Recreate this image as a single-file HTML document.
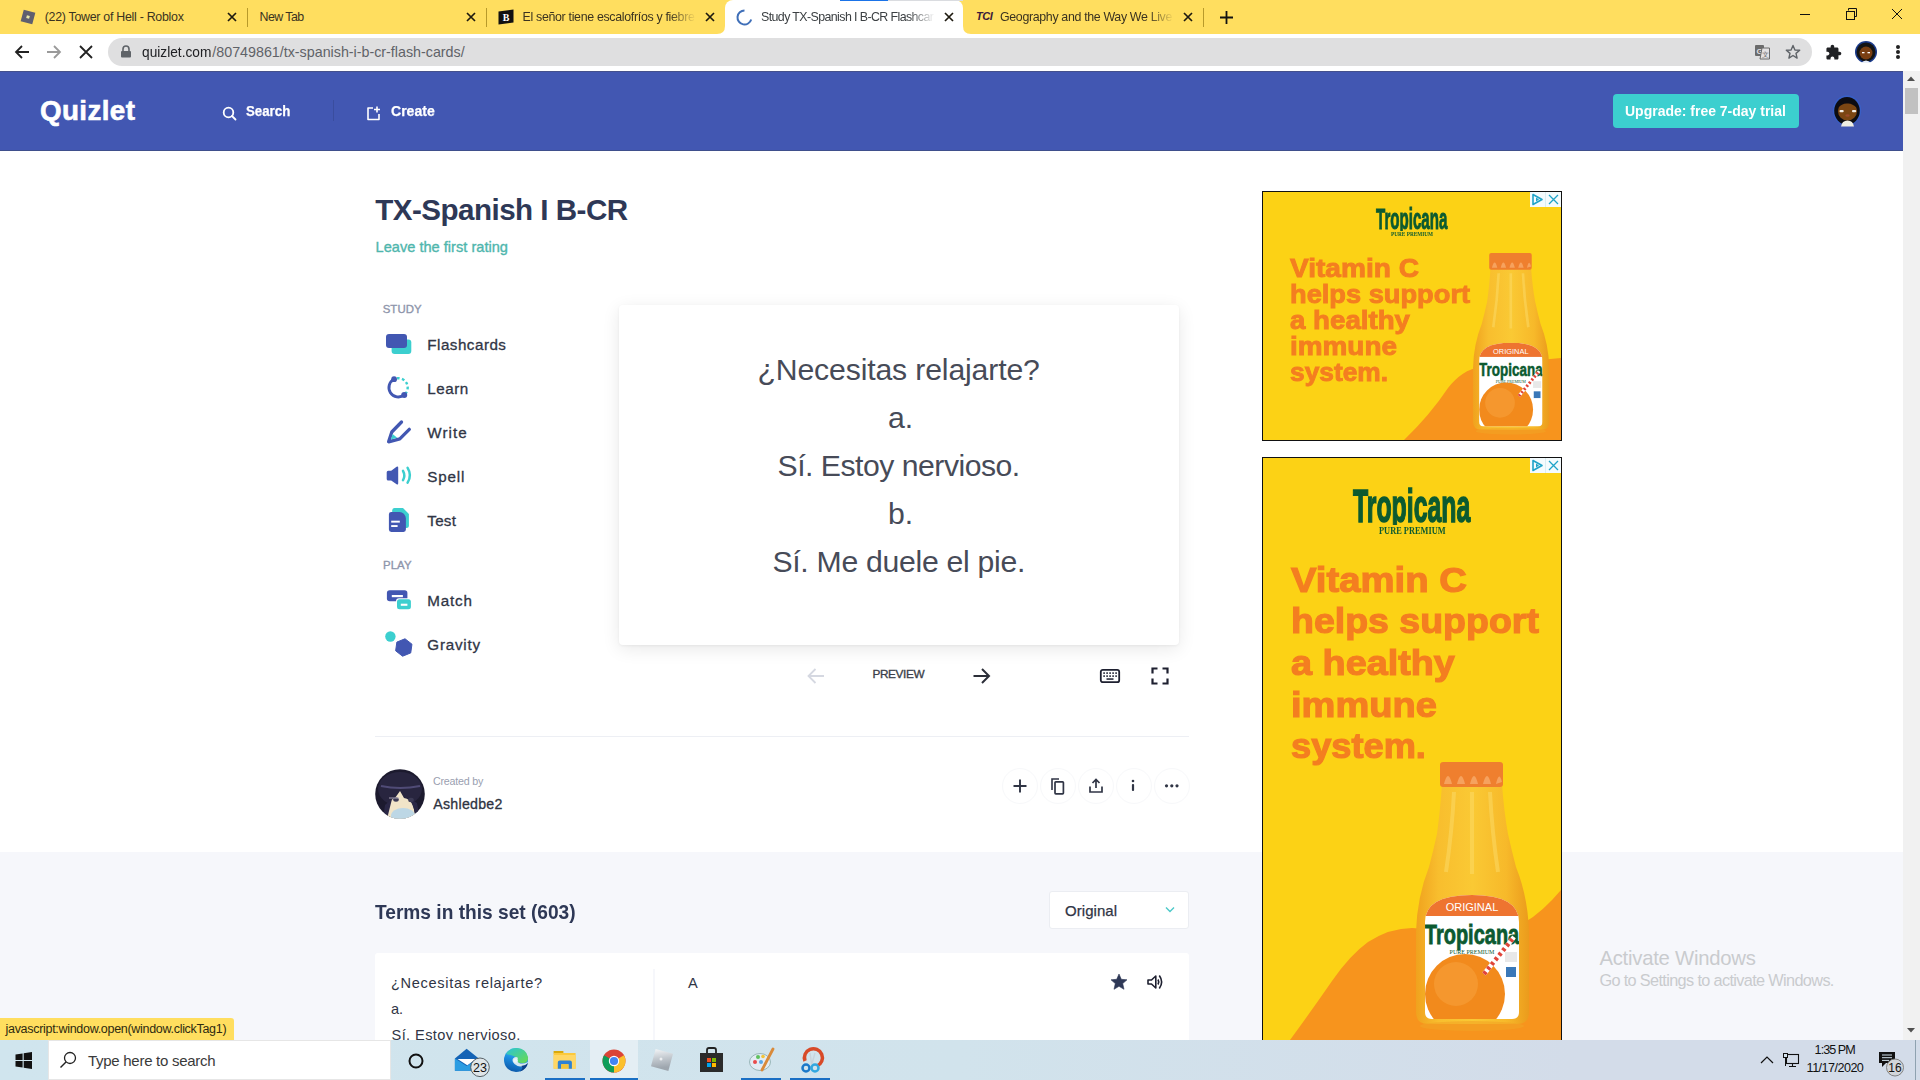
<!DOCTYPE html>
<html><head><meta charset="utf-8"><title>Quizlet</title>
<style>
html,body{margin:0;padding:0}
body{width:1920px;height:1080px;overflow:hidden;position:relative;background:#fff;font-family:"Liberation Sans",sans-serif}
.t{position:absolute;white-space:nowrap;line-height:1;transform-origin:left top}
svg{overflow:visible}
</style></head><body>
<div style="position:absolute;left:0;top:0;width:1920px;height:34px;background:#FFDE5F"></div>
<div style="position:absolute;left:725px;top:0;width:238px;height:35px;background:#fff;border-radius:8px 8px 0 0"></div>
<svg style="position:absolute;left:717px;top:26px" width="8" height="8"><path d="M0 8 Q8 8 8 0 L8 8 Z" fill="#fff"/></svg>
<svg style="position:absolute;left:963px;top:26px" width="8" height="8"><path d="M8 8 Q0 8 0 0 L0 8 Z" fill="#fff"/></svg>
<div style="position:absolute;left:840px;top:0;width:48px;height:1px;background:#1a73e8"></div>
<div style="position:absolute;left:888px;top:0;width:75px;height:1px;background:#dadce0"></div>
<svg style="position:absolute;left:19px;top:8px" width="18" height="18"><rect x="3" y="3" width="12" height="12" fill="#5f5f6f" transform="rotate(15 9 9)"/><rect x="7.5" y="7.5" width="3" height="3" fill="#e8e8a8" transform="rotate(15 9 9)"/></svg>
<svg style="position:absolute;left:497px;top:8px" width="18" height="18"><path d="M1.5 3.5 L16.5 1.5 L16.5 14.5 L1.5 16.5 Z" fill="#111"/><text x="9" y="13" font-family="Liberation Serif" font-weight="700" font-size="10" fill="#fff" text-anchor="middle">B</text></svg>
<svg style="position:absolute;left:736px;top:9px" width="17" height="17"><path d="M8.5 1.5 A7 7 0 1 0 15.2 10.5" fill="none" stroke="#3f6fb8" stroke-width="2"/></svg>
<div class="t" style="left:976px;top:11px;font-size:11px;font-weight:700;font-style:italic;color:#3a1a3a;letter-spacing:-0.5px">TCI</div>
<div class="t" style="left:44.70px;top:10.50px;font-size:12.40px;font-weight:400;color:#3b3320;letter-spacing:-0.280px;">(22) Tower of Hell - Roblox</div>
<div class="t" style="left:259.60px;top:10.50px;font-size:12.40px;font-weight:400;color:#3b3320;letter-spacing:-0.558px;">New Tab</div>
<div style="position:absolute;left:520px;top:0;width:176px;height:34px;overflow:hidden;-webkit-mask-image:linear-gradient(90deg,#000 85%,transparent)"><div class="t" style="left:2.50px;top:10.50px;font-size:12.40px;font-weight:400;color:#3b3320;letter-spacing:-0.319px;">El señor tiene escalofríos y fiebre</div></div>
<div style="position:absolute;left:759px;top:0;width:176px;height:34px;overflow:hidden;-webkit-mask-image:linear-gradient(90deg,#000 85%,transparent)"><div class="t" style="left:2.00px;top:10.50px;font-size:12.40px;font-weight:400;color:#3c4043;letter-spacing:-0.591px;">Study TX-Spanish I B-CR Flashcar</div></div>
<div style="position:absolute;left:998px;top:0;width:176px;height:34px;overflow:hidden;-webkit-mask-image:linear-gradient(90deg,#000 85%,transparent)"><div class="t" style="left:2.00px;top:10.50px;font-size:12.40px;font-weight:400;color:#3b3320;letter-spacing:-0.338px;">Geography and the Way We Live</div></div>
<svg style="position:absolute;left:227px;top:12px" width="10" height="10"><path d="M1 1 L9 9 M9 1 L1 9" stroke="#1e1a10" stroke-width="1.7"/></svg>
<svg style="position:absolute;left:466px;top:12px" width="10" height="10"><path d="M1 1 L9 9 M9 1 L1 9" stroke="#1e1a10" stroke-width="1.7"/></svg>
<svg style="position:absolute;left:705px;top:12px" width="10" height="10"><path d="M1 1 L9 9 M9 1 L1 9" stroke="#1e1a10" stroke-width="1.7"/></svg>
<svg style="position:absolute;left:944px;top:12px" width="10" height="10"><path d="M1 1 L9 9 M9 1 L1 9" stroke="#1e1a10" stroke-width="1.7"/></svg>
<svg style="position:absolute;left:1183px;top:12px" width="10" height="10"><path d="M1 1 L9 9 M9 1 L1 9" stroke="#1e1a10" stroke-width="1.7"/></svg>
<div style="position:absolute;left:247px;top:8px;width:1px;height:19px;background:#b89a2a"></div>
<div style="position:absolute;left:486px;top:8px;width:1px;height:19px;background:#b89a2a"></div>
<div style="position:absolute;left:1203px;top:8px;width:1px;height:19px;background:#b89a2a"></div>
<svg style="position:absolute;left:1219px;top:10px" width="15" height="15"><path d="M7.5 1 V14 M1 7.5 H14" stroke="#111" stroke-width="1.8"/></svg>
<div style="position:absolute;left:1800px;top:14px;width:10px;height:1px;background:#111"></div>
<svg style="position:absolute;left:1845px;top:8px" width="13" height="13"><path d="M3.5 2.5 V0.5 H11.5 V8.5 H9.5" fill="none" stroke="#111" stroke-width="1"/><rect x="1.5" y="3.5" width="8" height="8" fill="none" stroke="#111" stroke-width="1"/></svg>
<svg style="position:absolute;left:1891px;top:8px" width="12" height="12"><path d="M1 1 L11 11 M11 1 L1 11" stroke="#111" stroke-width="1"/></svg>
<div style="position:absolute;left:0;top:34px;width:1920px;height:36px;background:#fff"></div>
<div style="position:absolute;left:108px;top:38px;width:1704px;height:28px;background:#DFDFE0;border-radius:14px"></div>
<svg style="position:absolute;left:14px;top:44px" width="16" height="16"><path d="M15 8 H2 M8 2 L2 8 L8 14" fill="none" stroke="#222" stroke-width="1.8"/></svg>
<svg style="position:absolute;left:46px;top:44px" width="16" height="16"><path d="M1 8 H14 M8 2 L14 8 L8 14" fill="none" stroke="#9a9a9a" stroke-width="1.8"/></svg>
<svg style="position:absolute;left:79px;top:45px" width="14" height="14"><path d="M1 1 L13 13 M13 1 L1 13" stroke="#222" stroke-width="1.8"/></svg>
<svg style="position:absolute;left:120px;top:45px" width="12" height="13"><path d="M3 6 V4 A3 3 0 0 1 9 4 V6" fill="none" stroke="#5f6368" stroke-width="1.6"/><rect x="1" y="6" width="10" height="6.5" rx="1" fill="#5f6368"/></svg>
<div class="t" style="left:142.40px;top:45.00px;font-size:14.30px;font-weight:400;color:#202124;transform:scaleX(0.9591);">quizlet.com</div>
<div class="t" style="left:212.30px;top:45.00px;font-size:14.30px;font-weight:400;color:#5f6368;letter-spacing:-0.009px;">/80749861/tx-spanish-i-b-cr-flash-cards/</div>
<svg style="position:absolute;left:1754px;top:44px" width="17" height="16"><rect x="1" y="1" width="9" height="11" rx="1" fill="#6b6b6b"/><text x="5.5" y="10" font-size="8" font-weight="700" fill="#e3e1e3" text-anchor="middle" font-family="Liberation Sans">G</text><path d="M8 4 H15.5 V15 H6 Z" fill="#e3e1e3" stroke="#6b6b6b" stroke-width="1"/><text x="11.5" y="12.5" font-size="7" fill="#6b6b6b" text-anchor="middle" font-family="Liberation Sans">文</text></svg>
<svg style="position:absolute;left:1785px;top:44px" width="16" height="16"><path d="M8 1.5 L9.9 6 L14.7 6.3 L11 9.4 L12.1 14.1 L8 11.5 L3.9 14.1 L5 9.4 L1.3 6.3 L6.1 6 Z" fill="none" stroke="#5f6368" stroke-width="1.4" stroke-linejoin="round"/></svg>
<svg style="position:absolute;left:1825px;top:44px" width="17" height="17" viewBox="0 0 24 24"><path d="M20.5 11H19V7c0-1.1-.9-2-2-2h-4V3.5C13 2.12 11.88 1 10.5 1S8 2.12 8 3.5V5H4c-1.1 0-1.99.9-1.99 2v3.8H3.5c1.49 0 2.7 1.210 2.7 2.7s-1.21 2.7-2.7 2.7H2V20c0 1.1.9 2 2 2h3.8v-1.5c0-1.49 1.21-2.7 2.7-2.7 1.49 0 2.7 1.21 2.7 2.7V22H17c1.1 0 2-.9 2-2v-4h1.5c1.38 0 2.5-1.12 2.5-2.5S21.88 11 20.5 11z" fill="#202124"/></svg>
<svg style="position:absolute;left:1855px;top:41px" width="22" height="22"><circle cx="11" cy="11" r="11" fill="#1a3a8a"/><circle cx="11" cy="11" r="9.5" fill="#141414"/><ellipse cx="11" cy="12" rx="6.5" ry="6.5" fill="#7a3f12"/><rect x="7" y="11" width="2.5" height="1.3" fill="#fff"/><rect x="12.5" y="11" width="2.5" height="1.3" fill="#fff"/><path d="M6 22 Q11 17 16 22 Z" fill="#e8eef8"/></svg>
<div style="position:absolute;left:1896px;top:45px;width:4px;height:4px;border-radius:2px;background:#222"></div>
<div style="position:absolute;left:1896px;top:50px;width:4px;height:4px;border-radius:2px;background:#222"></div>
<div style="position:absolute;left:1896px;top:55px;width:4px;height:4px;border-radius:2px;background:#222"></div>
<div style="position:absolute;left:0;top:70px;width:1903px;height:970px;background:#fff"></div>
<div style="position:absolute;left:0;top:852px;width:1903px;height:188px;background:#F6F7FB"></div>
<div style="position:absolute;left:0;top:71px;width:1903px;height:80px;background:#4257B2;border-top:1px solid #44508c;border-bottom:1px solid #3f4f8c;box-sizing:border-box"></div>
<div class="t" style="left:39.90px;top:97.17px;font-size:27.80px;font-weight:700;color:#fff;letter-spacing:0.398px;-webkit-text-stroke:0.6px #fff;">Quizlet</div>
<svg style="position:absolute;left:222px;top:106px" width="15" height="15"><circle cx="6.5" cy="6.5" r="4.8" fill="none" stroke="#fff" stroke-width="1.8"/><path d="M10 10 L13.5 13.5" stroke="#fff" stroke-width="1.8" stroke-linecap="round"/></svg>
<div class="t" style="left:246.40px;top:102.76px;font-size:15.40px;font-weight:700;color:#fff;transform:scaleX(0.8626);-webkit-text-stroke:0.25px #fff;">Search</div>
<div style="position:absolute;left:333px;top:100px;width:1px;height:21px;background:#3a4d9e"></div>
<svg style="position:absolute;left:366px;top:105px" width="16" height="16"><path d="M7 3 H2 V14.5 H13 V9" fill="none" stroke="#fff" stroke-width="1.6" stroke-linejoin="round"/><path d="M11 1.5 V7.5 M8 4.5 H14" stroke="#fff" stroke-width="1.6"/></svg>
<div class="t" style="left:390.50px;top:102.76px;font-size:15.40px;font-weight:700;color:#fff;transform:scaleX(0.9131);-webkit-text-stroke:0.25px #fff;">Create</div>
<div style="position:absolute;left:1613px;top:94px;width:186px;height:34px;background:#3CCFCF;border-radius:4px"></div>
<div class="t" style="left:1625.00px;top:104.24px;font-size:14.60px;font-weight:700;color:#fff;transform:scaleX(0.9585);">Upgrade: free 7-day trial</div>
<svg style="position:absolute;left:1830px;top:93px" width="34" height="36"><ellipse cx="17" cy="17.5" rx="14.2" ry="15.2" fill="#2f6be0" opacity="0.45"/><ellipse cx="17" cy="17.8" rx="12.8" ry="13.9" fill="#0c0c12"/><ellipse cx="17.5" cy="18" rx="9.6" ry="9.6" fill="#7b4613"/><path d="M8 15 Q10 6 17.5 6.5 Q25 6 27 15 Q22 10 17.5 10.5 Q12 10 8 15Z" fill="#0c0c12"/><rect x="9.5" y="17" width="4.2" height="2.2" rx="1" fill="#f4efe8"/><rect x="22" y="17" width="4.2" height="2.2" rx="1" fill="#f4efe8"/><ellipse cx="17.5" cy="22.5" rx="2.2" ry="1.2" fill="#9a4a2a"/><path d="M11 33.5 Q12 27.5 17.5 27.5 Q23 27.5 24 33.5 Z" fill="#eeeee4"/></svg>
<div style="position:absolute;left:1903px;top:71px;width:17px;height:969px;background:#F1F1F1"></div>
<div style="position:absolute;left:1905px;top:88px;width:13px;height:26px;background:#C1C1C1"></div>
<svg style="position:absolute;left:1906px;top:75px" width="10" height="8"><path d="M1 6 L5 1.5 L9 6 Z" fill="#505050"/></svg>
<svg style="position:absolute;left:1906px;top:1026px" width="10" height="8"><path d="M1 2 L5 6.5 L9 2 Z" fill="#505050"/></svg>
<div class="t" style="left:375.20px;top:194.84px;font-size:29.60px;font-weight:700;color:#2E3856;letter-spacing:-0.532px;">TX-Spanish I B-CR</div>
<div class="t" style="left:375.50px;top:239.64px;font-size:14.60px;font-weight:400;color:#4FB6AD;letter-spacing:0.011px;-webkit-text-stroke:0.35px #4FB6AD;">Leave the first rating</div>
<div class="t" style="left:382.70px;top:304.45px;font-size:11.40px;font-weight:400;color:#8E95AB;letter-spacing:0.088px;-webkit-text-stroke:0.35px #8E95AB;">STUDY</div>
<div class="t" style="left:383.00px;top:560.15px;font-size:11.40px;font-weight:400;color:#8E95AB;letter-spacing:0.090px;-webkit-text-stroke:0.35px #8E95AB;">PLAY</div>
<div class="t" style="left:427.30px;top:336.93px;font-size:15.20px;font-weight:400;color:#303545;letter-spacing:0.486px;-webkit-text-stroke:0.3px #303545;">Flashcards</div>
<div class="t" style="left:427.30px;top:380.73px;font-size:15.20px;font-weight:400;color:#303545;letter-spacing:0.522px;-webkit-text-stroke:0.3px #303545;">Learn</div>
<div class="t" style="left:427.30px;top:424.63px;font-size:15.20px;font-weight:400;color:#303545;letter-spacing:1.078px;-webkit-text-stroke:0.3px #303545;">Write</div>
<div class="t" style="left:427.30px;top:468.53px;font-size:15.20px;font-weight:400;color:#303545;letter-spacing:0.845px;-webkit-text-stroke:0.3px #303545;">Spell</div>
<div class="t" style="left:427.30px;top:512.53px;font-size:15.20px;font-weight:400;color:#303545;letter-spacing:0.269px;-webkit-text-stroke:0.3px #303545;">Test</div>
<div class="t" style="left:427.30px;top:593.43px;font-size:15.20px;font-weight:400;color:#303545;letter-spacing:0.820px;-webkit-text-stroke:0.3px #303545;">Match</div>
<div class="t" style="left:427.30px;top:637.03px;font-size:15.20px;font-weight:400;color:#303545;letter-spacing:0.765px;-webkit-text-stroke:0.3px #303545;">Gravity</div>
<svg style="position:absolute;left:380px;top:325px" width="40" height="340" viewBox="380 325 40 340"><rect x="391.6" y="339.4" width="19.7" height="14.6" rx="3" fill="#3CCFCF"/><rect x="386" y="334" width="21" height="14" rx="3" fill="#4257B2"/><path d="M394.09 379.19 A9.4 9.4 0 1 0 404.22 394.91" fill="none" stroke="#4257B2" stroke-width="2.9"/><path d="M396.99 378.29 A9.4 9.4 0 0 1 405.71 393.39" fill="none" stroke="#3CCFCF" stroke-width="2.4" stroke-dasharray="2.6 2.4"/><circle cx="394.09" cy="379.19" r="2.9" fill="#4257B2"/><circle cx="404.22" cy="394.91" r="3" fill="#4257B2"/><path d="M401.5 422 L391.8 432 L388.6 441.8 L399.8 438.8 L409.3 429.3" fill="none" stroke="#4257B2" stroke-width="3.3" stroke-linecap="round" stroke-linejoin="round"/><path d="M392.6 434 L390.9 439.6 L397.2 437.8 Z" fill="#3CCFCF"/><path d="M386.7 472.2 Q386.7 470.7 388.2 470.7 H391.2 L396.6 466.7 Q398.2 465.8 398.2 467.6 V483.3 Q398.2 485.1 396.6 484.2 L391.2 480.4 H388.2 Q386.7 480.4 386.7 478.9 Z" fill="#4257B2"/><path d="M403 470.8 Q405.6 475.5 403 480.2" fill="none" stroke="#3CCFCF" stroke-width="2.5" stroke-linecap="round"/><path d="M407.6 467.8 Q412.2 475.2 407.6 482.6" fill="none" stroke="#3CCFCF" stroke-width="2.5" stroke-linecap="round"/><path d="M394.5 508.1 H403 L408.9 514 V525.5 Q408.9 528 406.4 528 H394.5 Q392.2 528 392.2 525.5 V510.5 Q392.2 508.1 394.5 508.1 Z" fill="#3CCFCF"/><path d="M391.3 511.9 H399.5 Q402 511.9 403.8 513.8 L404.2 514.2 Q405.9 516 405.9 518.5 V529.5 Q405.9 531.9 403.5 531.9 H391.3 Q388.9 531.9 388.9 529.5 V514.3 Q388.9 511.9 391.3 511.9 Z" fill="#4257B2"/><rect x="391.2" y="520.7" width="8.6" height="1.9" fill="#fff"/><rect x="391.2" y="525.1" width="6.4" height="1.9" fill="#fff"/><rect x="386.9" y="590.2" width="20.5" height="11.1" rx="2.8" fill="#4257B2"/><rect x="391.8" y="595" width="11.1" height="2.2" fill="#fff"/><rect x="396" y="598.2" width="16" height="12.1" rx="3" fill="#fff"/><rect x="397" y="599.2" width="13.9" height="10.1" rx="2.5" fill="#3CCFCF"/><rect x="400.8" y="603.7" width="6.6" height="2.1" fill="#fff"/><circle cx="390.4" cy="636.5" r="5.2" fill="#3CCFCF"/><polygon points="405.02,638.79 411.96,644.20 410.73,652.92 402.58,656.21 395.64,650.80 396.87,642.08" fill="#4257B2" stroke="#4257B2" stroke-width="1" stroke-linejoin="round"/></svg>
<div style="position:absolute;left:619px;top:305px;width:560px;height:340px;background:#fff;border-radius:4px;box-shadow:0 4px 18px rgba(0,0,0,0.09),0 1px 3px rgba(0,0,0,0.05)"></div>
<div class="t" style="left:757.50px;top:355.24px;font-size:30.20px;font-weight:400;color:#474b58;letter-spacing:-0.144px;">¿Necesitas relajarte?</div>
<div class="t" style="left:888.00px;top:403.04px;font-size:30.20px;font-weight:400;color:#474b58;">a.</div>
<div class="t" style="left:777.50px;top:451.04px;font-size:30.20px;font-weight:400;color:#474b58;letter-spacing:-0.495px;">Sí. Estoy nervioso.</div>
<div class="t" style="left:888.00px;top:499.14px;font-size:30.20px;font-weight:400;color:#474b58;">b.</div>
<div class="t" style="left:772.40px;top:547.24px;font-size:30.20px;font-weight:400;color:#474b58;letter-spacing:-0.290px;">Sí. Me duele el pie.</div>
<svg style="position:absolute;left:806px;top:666px" width="20" height="20"><path d="M18 10 H3 M9.5 3 L2.5 10 L9.5 17" fill="none" stroke="#D5D8E1" stroke-width="1.8"/></svg>
<div class="t" style="left:872.40px;top:668.71px;font-size:11.80px;font-weight:400;color:#3c3f4a;letter-spacing:-0.359px;-webkit-text-stroke:0.35px #3c3f4a;">PREVIEW</div>
<svg style="position:absolute;left:971px;top:666px" width="20" height="20"><path d="M2.5 10 H17.5 M11 3 L18 10 L11 17" fill="none" stroke="#2b2e38" stroke-width="2"/></svg>
<svg style="position:absolute;left:1099px;top:668px" width="22" height="16"><rect x="1.8" y="1.8" width="18.4" height="12.4" rx="2" fill="none" stroke="#1e2030" stroke-width="1.8"/><g fill="#1e2030"><rect x="4.3" y="4.3" width="1.6" height="1.6"/><rect x="7.3" y="4.3" width="1.6" height="1.6"/><rect x="10.3" y="4.3" width="1.6" height="1.6"/><rect x="13.3" y="4.3" width="1.6" height="1.6"/><rect x="16.3" y="4.3" width="1.6" height="1.6"/><rect x="4.3" y="7.3" width="1.6" height="1.6"/><rect x="7.3" y="7.3" width="1.6" height="1.6"/><rect x="10.3" y="7.3" width="1.6" height="1.6"/><rect x="13.3" y="7.3" width="1.6" height="1.6"/><rect x="16.3" y="7.3" width="1.6" height="1.6"/><rect x="7.5" y="10.3" width="7" height="1.5"/></g></svg>
<svg style="position:absolute;left:1151px;top:667px" width="18" height="18"><path d="M1.5 6.5 V1.5 H6.5 M11.5 1.5 H16.5 V6.5 M16.5 11.5 V16.5 H11.5 M6.5 16.5 H1.5 V11.5" fill="none" stroke="#1e2030" stroke-width="2.2"/></svg>
<div style="position:absolute;left:375px;top:736px;width:814px;height:1px;background:#EDEFF4"></div>
<svg style="position:absolute;left:375px;top:769px" width="50" height="50"><defs><clipPath id="cav"><circle cx="25" cy="25" r="24.8"/></clipPath></defs><g clip-path="url(#cav)"><rect width="50" height="50" fill="#1c1a2e"/><ellipse cx="25" cy="20" rx="22" ry="17" fill="#28253f"/><path d="M6 17 Q25 21 45 17" fill="none" stroke="#5a5585" stroke-width="2.2" opacity="0.8"/><path d="M10 50 L13 36 Q16 30 20 29 L25 22 L29 29 Q35 30 38 36 L41 50 Z" fill="#f1e4c8"/><path d="M17 30 L14 42 L12 50 H8 L10 36Z" fill="#2a2745"/><path d="M35 30 L39 40 L41 50 H45 L42 34Z" fill="#2a2745"/><ellipse cx="21" cy="30.5" rx="2.8" ry="2.2" fill="#3c3a55"/><ellipse cx="36" cy="31" rx="2.8" ry="2.2" fill="#3c3a55"/><path d="M14 29 H24" stroke="#c8c0d0" stroke-width="0.8"/><ellipse cx="28" cy="47" rx="12" ry="8" fill="#bdd7e5"/></g></svg>
<div class="t" style="left:432.90px;top:776.04px;font-size:10.70px;font-weight:400;color:#9aa0b0;letter-spacing:-0.214px;">Created by</div>
<div class="t" style="left:433.30px;top:796.88px;font-size:14.20px;font-weight:400;color:#2e3341;letter-spacing:0.251px;-webkit-text-stroke:0.3px #2e3341;">Ashledbe2</div>
<div style="position:absolute;left:1002px;top:768px;width:34px;height:34px;border-radius:50%;border:1px solid #F7F8FA;background:#fff"></div>
<div style="position:absolute;left:1040px;top:768px;width:34px;height:34px;border-radius:50%;border:1px solid #F7F8FA;background:#fff"></div>
<div style="position:absolute;left:1078px;top:768px;width:34px;height:34px;border-radius:50%;border:1px solid #F7F8FA;background:#fff"></div>
<div style="position:absolute;left:1116px;top:768px;width:34px;height:34px;border-radius:50%;border:1px solid #F7F8FA;background:#fff"></div>
<div style="position:absolute;left:1154px;top:768px;width:34px;height:34px;border-radius:50%;border:1px solid #F7F8FA;background:#fff"></div>
<svg style="position:absolute;left:1012px;top:778px" width="16" height="16"><path d="M8 1.5 V14.5 M1.5 8 H14.5" stroke="#303545" stroke-width="1.9"/></svg>
<svg style="position:absolute;left:1050px;top:777px" width="16" height="18"><path d="M2 13 V2 H9" fill="none" stroke="#303545" stroke-width="1.6"/><rect x="5" y="4.8" width="8.4" height="12" rx="0.8" fill="none" stroke="#303545" stroke-width="1.7"/></svg>
<svg style="position:absolute;left:1088px;top:778px" width="16" height="16"><path d="M8 10 V2 M4.5 5 L8 1.5 L11.5 5" fill="none" stroke="#303545" stroke-width="1.7"/><path d="M2 8.5 V14 H14 V8.5" fill="none" stroke="#303545" stroke-width="1.7"/></svg>
<svg style="position:absolute;left:1128px;top:778px" width="10" height="16"><circle cx="5" cy="3" r="1.3" fill="#303545"/><rect x="3.9" y="6" width="2.2" height="7" rx="1" fill="#303545"/></svg>
<svg style="position:absolute;left:1164px;top:782px" width="16" height="8"><circle cx="2.5" cy="3.8" r="1.6" fill="#303545"/><circle cx="7.8" cy="3.8" r="1.6" fill="#303545"/><circle cx="13" cy="3.8" r="1.6" fill="#303545"/></svg>
<div class="t" style="left:375.30px;top:902.36px;font-size:20.60px;font-weight:700;color:#2E3856;transform:scaleX(0.9292);">Terms in this set (603)</div>
<div style="position:absolute;left:1049px;top:891px;width:138px;height:36px;background:#fff;border:1px solid #EBEDF2;border-radius:3px"></div>
<div class="t" style="left:1065.00px;top:903.20px;font-size:15.00px;font-weight:400;color:#303545;letter-spacing:0.046px;-webkit-text-stroke:0.25px #303545;">Original</div>
<svg style="position:absolute;left:1164px;top:905px" width="12" height="9"><path d="M2 2.5 L6 6.5 L10 2.5" fill="none" stroke="#4cc9c9" stroke-width="1.4"/></svg>
<div style="position:absolute;left:375px;top:953px;width:814px;height:100px;background:#fff;border-radius:3px"></div>
<div style="position:absolute;left:653px;top:969px;width:2px;height:80px;background:#F6F7FB"></div>
<div class="t" style="left:391.00px;top:975.54px;font-size:14.60px;font-weight:400;color:#303545;letter-spacing:0.666px;">¿Necesitas relajarte?</div>
<div class="t" style="left:391.00px;top:1001.54px;font-size:14.60px;font-weight:400;color:#303545;">a.</div>
<div class="t" style="left:391.50px;top:1027.54px;font-size:14.60px;font-weight:400;color:#303545;letter-spacing:0.400px;">Sí. Estoy nervioso.</div>
<div class="t" style="left:688.00px;top:975.54px;font-size:14.60px;font-weight:400;color:#303545;">A</div>
<svg style="position:absolute;left:1110px;top:973px" width="18" height="18"><path d="M9 1 L11.3 6.3 L17 6.8 L12.7 10.6 L14 16.3 L9 13.3 L4 16.3 L5.3 10.6 L1 6.8 L6.7 6.3 Z" fill="#2E3856" stroke="#2E3856" stroke-width="0.6" stroke-linejoin="round"/></svg>
<svg style="position:absolute;left:1146px;top:973px" width="18" height="18"><path d="M2 7 H5.5 L9.8 3 V15 L5.5 11 H2 Z" fill="none" stroke="#1e2030" stroke-width="1.6" stroke-linejoin="round"/><path d="M12 6.5 Q13.5 9 12 11.5" fill="none" stroke="#1e2030" stroke-width="1.6"/><path d="M13.3 2.5 Q18 9 13.3 15.5" fill="none" stroke="#1e2030" stroke-width="1.6"/></svg>
<div style="position:absolute;left:1262px;top:191px;width:300px;height:250px;background:#111"></div>
<svg style="position:absolute;left:1263px;top:192px" width="298" height="248" viewBox="1263 192 298 248">
<rect x="1263" y="192" width="298" height="248" fill="#FCD215"/>
<path d="M1404 440 Q1430 415 1448 388 Q1462 370 1480 367 Q1520 362 1561 358 V440 Z" fill="#F7941D"/>
</svg>
<div style="position:absolute;left:1370px;top:200px;width:90px;height:31px;overflow:hidden"><div class="t" style="left:6.00px;top:4.11px;font-size:30.00px;font-weight:700;color:#0c5a30;transform:scaleX(0.5033);-webkit-text-stroke:1px #0c5a30;">Tropicana</div></div>
<div class="t" style="left:1391.00px;top:231.64px;font-size:5.50px;font-weight:700;color:#0c5a30;transform:scaleX(0.9582);font-family:'Liberation Serif',serif;">PURE PREMIUM</div>
<div class="t" style="left:1290.00px;top:256.34px;font-size:25.00px;font-weight:700;color:#F47E20;transform:scaleX(1.1230);-webkit-text-stroke:0.9px #F47E20;">Vitamin C</div>
<div class="t" style="left:1290.00px;top:282.34px;font-size:25.00px;font-weight:700;color:#F47E20;transform:scaleX(1.0893);-webkit-text-stroke:0.9px #F47E20;">helps support</div>
<div class="t" style="left:1290.00px;top:308.34px;font-size:25.00px;font-weight:700;color:#F47E20;transform:scaleX(1.1073);-webkit-text-stroke:0.9px #F47E20;">a healthy</div>
<div class="t" style="left:1290.00px;top:334.34px;font-size:25.00px;font-weight:700;color:#F47E20;transform:scaleX(1.1160);-webkit-text-stroke:0.9px #F47E20;">immune</div>
<div class="t" style="left:1290.00px;top:360.34px;font-size:25.00px;font-weight:700;color:#F47E20;transform:scaleX(1.0523);-webkit-text-stroke:0.9px #F47E20;">system.</div>
<svg style="position:absolute;left:1473.0px;top:253.0px" width="76.3" height="182.2" viewBox="0 0 113 270"><defs><linearGradient id="bba" x1="0" x2="1"><stop offset="0" stop-color="#F0A21E"/><stop offset="0.2" stop-color="#F8BE2E"/><stop offset="0.5" stop-color="#FAC934"/><stop offset="0.8" stop-color="#F7B92A"/><stop offset="1" stop-color="#EB9B1C"/></linearGradient><clipPath id="lca"><path d="M9 160 Q9 133 56 133 Q103 133 103 160 V250 Q103 257 96 257 H16 Q9 257 9 250 Z"/></clipPath></defs><path d="M26 22 H86 Q88 50 92 72 Q96 90 100 105 Q112 135 113 170 V250 Q113 262 101 262 H12 Q0 262 0 250 V170 Q1 135 13 105 Q17 90 21 72 Q24 50 26 22 Z" fill="url(#bba)"/><path d="M38 30 Q36 70 30 110 M56 30 V112 M74 30 Q76 70 82 110" fill="none" stroke="#FCDB6A" stroke-width="4" opacity="0.5"/><path d="M27 0 H84 Q87 0 87 3 V22 Q87 25 84 25 H27 Q24 25 24 22 V3 Q24 0 27 0 Z" fill="#EF7F2E"/><path d="M28 22 Q32 6 36 22 M41 22 Q45 6 49 22 M54 22 Q58 6 62 22 M67 22 Q71 6 75 22 M80 22 Q83 8 86 20" fill="#F6A25E"/><g clip-path="url(#lca)"><rect x="0" y="130" width="113" height="130" fill="#fff"/><rect x="0" y="130" width="113" height="24" fill="#EE7430"/><text x="56" y="149" font-family="Liberation Sans" font-size="11" fill="#fff" text-anchor="middle">ORIGINAL</text><text x="56" y="182" font-family="Liberation Sans" font-weight="700" font-size="27" fill="#0c5a30" stroke="#0c5a30" stroke-width="0.8" text-anchor="middle" transform="translate(56 0) scale(0.74 1) translate(-56 0)">Tropicana</text><text x="56" y="192" font-family="Liberation Serif" font-size="6" fill="#0c5a30" text-anchor="middle">PURE PREMIUM</text><circle cx="49" cy="232" r="40" fill="#F28A1C"/><circle cx="40" cy="222" r="22" fill="#F6A03A" opacity="0.6"/><rect x="90" y="205" width="10" height="10" fill="#3a78b8"/><rect x="89" y="190" width="12" height="10" fill="#e8e8e8"/></g><path d="M68 212 L98 175" stroke="#fff" stroke-width="4.5"/><path d="M68 212 L98 175" stroke="#e0453a" stroke-width="4.5" stroke-dasharray="3 3"/><ellipse cx="56" cy="264" rx="52" ry="5" fill="#F2A324" opacity="0.6"/></svg>
<svg style="position:absolute;left:1530px;top:192px" width="31" height="15"><rect width="31" height="15" fill="#f4fbfd"/><path d="M3 2.5 L12 7.5 L3 12.5 Z" fill="none" stroke="#1fa3c8" stroke-width="1.6" stroke-linejoin="round"/><path d="M6 5.5 L9 7.5 L6 9.5Z" fill="#1fa3c8"/><path d="M15.5 0 V15" stroke="#cfe6ec" stroke-width="0.7"/><path d="M19 3 L28 12 M28 3 L19 12" stroke="#1fa3c8" stroke-width="1.3"/></svg>
<div style="position:absolute;left:1262px;top:457px;width:300px;height:583px;background:#111"></div>
<svg style="position:absolute;left:1263px;top:458px" width="298" height="582" viewBox="1263 458 298 582">
<rect x="1263" y="458" width="298" height="582" fill="#FCD215"/>
<path d="M1290 1040 Q1312 1010 1332 981 Q1350 955 1368 942 Q1390 928 1412 928 L1440 930 L1520 925 Q1540 915 1561 890 V1040 Z" fill="#F7941D"/>
</svg>
<div style="position:absolute;left:1345px;top:480px;width:135px;height:45px;overflow:hidden"><div class="t" style="left:8.00px;top:2.21px;font-size:47.00px;font-weight:700;color:#0c5a30;transform:scaleX(0.5280);-webkit-text-stroke:1.6px #0c5a30;">Tropicana</div></div>
<div class="t" style="left:1379.00px;top:526.76px;font-size:9.50px;font-weight:700;color:#0c5a30;transform:scaleX(0.8794);font-family:'Liberation Serif',serif;">PURE PREMIUM</div>
<div class="t" style="left:1291.00px;top:562.86px;font-size:35.60px;font-weight:700;color:#F47E20;transform:scaleX(1.0759);-webkit-text-stroke:1.2px #F47E20;">Vitamin C</div>
<div class="t" style="left:1291.00px;top:604.46px;font-size:35.60px;font-weight:700;color:#F47E20;transform:scaleX(1.0539);-webkit-text-stroke:1.2px #F47E20;">helps support</div>
<div class="t" style="left:1291.00px;top:646.06px;font-size:35.60px;font-weight:700;color:#F47E20;transform:scaleX(1.0627);-webkit-text-stroke:1.2px #F47E20;">a healthy</div>
<div class="t" style="left:1291.00px;top:687.66px;font-size:35.60px;font-weight:700;color:#F47E20;transform:scaleX(1.0694);-webkit-text-stroke:1.2px #F47E20;">immune</div>
<div class="t" style="left:1291.00px;top:729.26px;font-size:35.60px;font-weight:700;color:#F47E20;transform:scaleX(1.0180);-webkit-text-stroke:1.2px #F47E20;">system.</div>
<svg style="position:absolute;left:1416.0px;top:762.0px" width="113.0" height="270.0" viewBox="0 0 113 270"><defs><linearGradient id="bbb" x1="0" x2="1"><stop offset="0" stop-color="#F0A21E"/><stop offset="0.2" stop-color="#F8BE2E"/><stop offset="0.5" stop-color="#FAC934"/><stop offset="0.8" stop-color="#F7B92A"/><stop offset="1" stop-color="#EB9B1C"/></linearGradient><clipPath id="lcb"><path d="M9 160 Q9 133 56 133 Q103 133 103 160 V250 Q103 257 96 257 H16 Q9 257 9 250 Z"/></clipPath></defs><path d="M26 22 H86 Q88 50 92 72 Q96 90 100 105 Q112 135 113 170 V250 Q113 262 101 262 H12 Q0 262 0 250 V170 Q1 135 13 105 Q17 90 21 72 Q24 50 26 22 Z" fill="url(#bbb)"/><path d="M38 30 Q36 70 30 110 M56 30 V112 M74 30 Q76 70 82 110" fill="none" stroke="#FCDB6A" stroke-width="4" opacity="0.5"/><path d="M27 0 H84 Q87 0 87 3 V22 Q87 25 84 25 H27 Q24 25 24 22 V3 Q24 0 27 0 Z" fill="#EF7F2E"/><path d="M28 22 Q32 6 36 22 M41 22 Q45 6 49 22 M54 22 Q58 6 62 22 M67 22 Q71 6 75 22 M80 22 Q83 8 86 20" fill="#F6A25E"/><g clip-path="url(#lcb)"><rect x="0" y="130" width="113" height="130" fill="#fff"/><rect x="0" y="130" width="113" height="24" fill="#EE7430"/><text x="56" y="149" font-family="Liberation Sans" font-size="11" fill="#fff" text-anchor="middle">ORIGINAL</text><text x="56" y="182" font-family="Liberation Sans" font-weight="700" font-size="27" fill="#0c5a30" stroke="#0c5a30" stroke-width="0.8" text-anchor="middle" transform="translate(56 0) scale(0.74 1) translate(-56 0)">Tropicana</text><text x="56" y="192" font-family="Liberation Serif" font-size="6" fill="#0c5a30" text-anchor="middle">PURE PREMIUM</text><circle cx="49" cy="232" r="40" fill="#F28A1C"/><circle cx="40" cy="222" r="22" fill="#F6A03A" opacity="0.6"/><rect x="90" y="205" width="10" height="10" fill="#3a78b8"/><rect x="89" y="190" width="12" height="10" fill="#e8e8e8"/></g><path d="M68 212 L98 175" stroke="#fff" stroke-width="4.5"/><path d="M68 212 L98 175" stroke="#e0453a" stroke-width="4.5" stroke-dasharray="3 3"/><ellipse cx="56" cy="264" rx="52" ry="5" fill="#F2A324" opacity="0.6"/></svg>
<svg style="position:absolute;left:1530px;top:458px" width="31" height="15"><rect width="31" height="15" fill="#f4fbfd"/><path d="M3 2.5 L12 7.5 L3 12.5 Z" fill="none" stroke="#1fa3c8" stroke-width="1.6" stroke-linejoin="round"/><path d="M6 5.5 L9 7.5 L6 9.5Z" fill="#1fa3c8"/><path d="M15.5 0 V15" stroke="#cfe6ec" stroke-width="0.7"/><path d="M19 3 L28 12 M28 3 L19 12" stroke="#1fa3c8" stroke-width="1.3"/></svg>
<div class="t" style="left:1599.40px;top:947.52px;font-size:20.30px;font-weight:400;color:#c9cbce;letter-spacing:-0.238px;">Activate Windows</div>
<div class="t" style="left:1599.40px;top:972.10px;font-size:16.30px;font-weight:400;color:#c9cbce;letter-spacing:-0.647px;">Go to Settings to activate Windows.</div>
<div style="position:absolute;left:0;top:1018px;width:234px;height:22px;background:#FFDE5F;border-radius:0 3px 0 0"></div>
<div class="t" style="left:5.51px;top:1022.82px;font-size:12.50px;font-weight:400;color:#2e2a10;letter-spacing:-0.299px;">javascript:window.open(window.clickTag1)</div>
<div style="position:absolute;left:0;top:1040px;width:1920px;height:40px;background:linear-gradient(90deg,#D0E5EE 0%,#D1E3EC 50%,#D3DCE9 82%,#D3DCE9 100%)"></div>
<div style="position:absolute;left:48px;top:1040px;width:343px;height:40px;background:#fff;border:1px solid #e6e6e6;box-sizing:border-box"></div>
<svg style="position:absolute;left:15px;top:1052px" width="18" height="17"><path d="M0.5 2.4 L7.6 1.4 V7.9 H0.5Z M8.7 1.2 L17 0 V7.9 H8.7Z M0.5 9 H7.6 V15.6 L0.5 14.6Z M8.7 9 H17 V17 L8.7 15.8Z" fill="#111"/></svg>
<svg style="position:absolute;left:59px;top:1051px" width="18" height="18"><circle cx="11" cy="7" r="5.5" fill="none" stroke="#222" stroke-width="1.3"/><path d="M7 11 L1.5 16.5" stroke="#222" stroke-width="1.4"/></svg>
<div class="t" style="left:88.00px;top:1052.90px;font-size:15.00px;font-weight:400;color:#3a3a3a;letter-spacing:-0.278px;">Type here to search</div>
<svg style="position:absolute;left:407px;top:1052px" width="18" height="18"><circle cx="9" cy="9" r="6.5" fill="none" stroke="#111" stroke-width="2"/></svg>
<svg style="position:absolute;left:450px;top:1045px" width="42" height="35" viewBox="450 1045 42 35"><path d="M454.9 1058.6 L466.6 1048.8 L478.8 1058.6 V1070.8 H454.9 Z" fill="#1463b5"/><path d="M454.9 1058.6 L466.6 1066 L478.8 1058.6 V1070.8 H454.9 Z" fill="#2c9de2"/><path d="M457.5 1059 H476 L467.3 1065.2 Z" fill="#ffffff"/><circle cx="480" cy="1067.3" r="9.3" fill="#dfe5e8" stroke="#4a5258" stroke-width="0.9"/><text x="480" y="1071.6" font-family="Liberation Sans" font-size="12.5" fill="#111" text-anchor="middle">23</text></svg>
<svg style="position:absolute;left:503px;top:1047px" width="26" height="26" viewBox="503 1047 26 26"><defs><linearGradient id="eg1" x1="0" y1="1" x2="0.3" y2="0"><stop offset="0" stop-color="#0b4f9e"/><stop offset="0.6" stop-color="#1b8ce0"/><stop offset="1" stop-color="#3cc6f3"/></linearGradient><linearGradient id="eg2" x1="0" y1="0" x2="1" y2="1"><stop offset="0" stop-color="#2bc3d8"/><stop offset="1" stop-color="#6bdc4a"/></linearGradient></defs><circle cx="516" cy="1060" r="12" fill="url(#eg1)"/><path d="M506 1054 Q510 1047.5 517 1048 Q526 1048.5 528 1057 Q528.5 1062 524 1063 Q519 1063.5 516.5 1061.5 Q514.5 1059 516 1057 Q512 1055 506 1054 Z" fill="url(#eg2)"/><path d="M528 1062 Q527 1066 524 1066.5 Q518 1067.5 514.5 1064 Q511.5 1061 513 1058.5 Q516 1056 518 1058 Q516 1061 519 1063 Q523 1064.5 528 1062 Z" fill="#d6e6ee"/><circle cx="515.6" cy="1060.5" r="2.2" fill="#e8f4fa"/><path d="M528 1063 Q526.5 1069.5 520 1071.5 Q525 1066.5 520 1066 Q524.5 1066.5 528 1063 Z" fill="#0d3f8a"/></svg>
<svg style="position:absolute;left:553px;top:1050px" width="24" height="20" viewBox="553 1050 24 20"><rect x="553.6" y="1051" width="9.8" height="2.6" fill="#d9a90c"/><rect x="553.6" y="1053" width="22" height="15.7" fill="#fcc93c"/><rect x="553.6" y="1055" width="22" height="13.7" fill="#ffd766"/><path d="M557.8 1068.7 V1062.5 Q557.8 1060.5 559.8 1060.5 H569.9 Q571.9 1060.5 571.9 1062.5 V1068.7 H568.5 V1064.2 H561.2 V1068.7 Z" fill="#2d82d4"/><rect x="561.2" y="1064.2" width="7.3" height="4.5" fill="#f2c43a"/></svg>
<div style="position:absolute;left:545px;top:1078px;width:40px;height:2px;background:#1a6fc4"></div>
<div style="position:absolute;left:590px;top:1040px;width:48px;height:40px;background:#E4EEF4"></div>
<div style="position:absolute;left:590px;top:1078px;width:48px;height:2px;background:#1a6fc4"></div>
<svg style="position:absolute;left:602px;top:1049px" width="24" height="24"><circle cx="12" cy="12" r="11.5" fill="#db4437"/><path d="M12 12 L22 6.3 A11.5 11.5 0 0 1 12 23.5 Z" fill="#fbc02d"/><path d="M12 12 L12 23.5 A11.5 11.5 0 0 1 2 6.3 Z" fill="#0f9d58"/><circle cx="12" cy="12" r="5.2" fill="#fff"/><circle cx="12" cy="12" r="4.1" fill="#4285f4"/></svg>
<svg style="position:absolute;left:648px;top:1046px" width="28" height="28"><defs><linearGradient id="rg" x1="0" y1="0" x2="0.4" y2="1"><stop offset="0" stop-color="#f2f4f6"/><stop offset="0.5" stop-color="#c4cad0"/><stop offset="1" stop-color="#9ea6ae"/></linearGradient></defs><rect x="5" y="5" width="18" height="18" fill="url(#rg)" transform="rotate(15 14 14)"/><circle cx="13" cy="13" r="1.5" fill="#fff" opacity="0.7"/></svg>
<svg style="position:absolute;left:699px;top:1047px" width="25" height="26"><path d="M8 6 V3 Q8 1 10 1 H15 Q17 1 17 3 V6" fill="none" stroke="#222" stroke-width="1.8"/><rect x="1" y="6" width="23" height="19" fill="#2b2b2b"/><rect x="8" y="11" width="4" height="4" fill="#f25022"/><rect x="13" y="11" width="4" height="4" fill="#7fba00"/><rect x="8" y="16" width="4" height="4" fill="#00a4ef"/><rect x="13" y="16" width="4" height="4" fill="#ffb900"/></svg>
<svg style="position:absolute;left:748px;top:1047px" width="28" height="26"><ellipse cx="12" cy="15" rx="10.5" ry="8.5" fill="#e2ecf4" stroke="#8aa" stroke-width="0.8"/><circle cx="7" cy="15" r="2" fill="#e84b4b"/><circle cx="10" cy="10" r="2" fill="#5ec25e"/><circle cx="15" cy="9.5" r="1.8" fill="#f2c438"/><circle cx="13" cy="15" r="2" fill="#5aa8e8"/><path d="M25 2 L14 23" stroke="#d98a3a" stroke-width="2.8" stroke-linecap="round"/></svg>
<div style="position:absolute;left:741px;top:1078px;width:40px;height:2px;background:#1a6fc4"></div>
<svg style="position:absolute;left:799px;top:1047px" width="24" height="26"><path d="M6 14 A9 9 0 1 1 18 19" fill="none" stroke="#d84a28" stroke-width="3.5"/><path d="M11 6 L13 20 M16 6 L12 20" stroke="#c9d4dd" stroke-width="1.5"/><circle cx="7" cy="21" r="3.5" fill="none" stroke="#1a78c9" stroke-width="2.5"/><circle cx="16" cy="21" r="3.5" fill="none" stroke="#33a8e0" stroke-width="2.5"/></svg>
<div style="position:absolute;left:790px;top:1078px;width:40px;height:2px;background:#1a6fc4"></div>
<svg style="position:absolute;left:1760px;top:1055px" width="14" height="9"><path d="M1 8 L7 2 L13 8" fill="none" stroke="#111" stroke-width="1.2"/></svg>
<svg style="position:absolute;left:1783px;top:1053px" width="17" height="15"><rect x="3.5" y="1.5" width="12" height="9" fill="none" stroke="#111" stroke-width="1.1"/><path d="M9.5 10.5 V13.5 M6 13.5 H13" stroke="#111" stroke-width="1.1"/><rect x="0.5" y="0.5" width="4" height="4" fill="#d2e1ec" stroke="#111" stroke-width="1"/><path d="M2.5 4.5 V13" stroke="#111" stroke-width="1"/></svg>
<div class="t" style="left:1814.60px;top:1044.43px;font-size:12.60px;font-weight:400;color:#111;letter-spacing:-0.956px;">1:35 PM</div>
<div class="t" style="left:1806.60px;top:1062.13px;font-size:12.60px;font-weight:400;color:#111;letter-spacing:-0.535px;">11/17/2020</div>
<svg style="position:absolute;left:1878px;top:1051px" width="28" height="26"><path d="M1 1 H17 V12 H8 L4 16 V12 H1Z" fill="#111"/><path d="M4 4 H14 M4 6.7 H14 M4 9.4 H11" stroke="#d2e1ec" stroke-width="1"/><circle cx="17" cy="16.5" r="8.5" fill="#d2d6da" stroke="#777" stroke-width="0.9"/><text x="17" y="21" font-family="Liberation Sans" font-size="12" fill="#111" text-anchor="middle">16</text></svg>
<div style="position:absolute;left:1915px;top:1040px;width:1px;height:40px;background:#8fa2b0"></div>
</body></html>
